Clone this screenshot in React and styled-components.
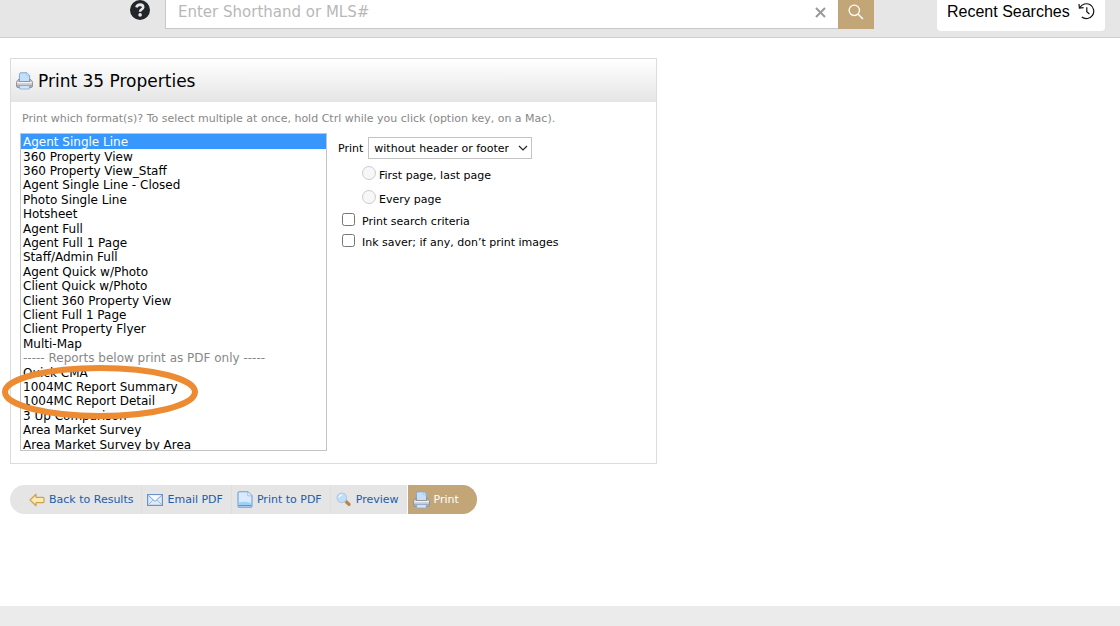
import { useState } from "react";
import styled, { createGlobalStyle } from "styled-components";

const FORMATS = [
  "Agent Single Line",
  "360 Property View",
  "360 Property View_Staff",
  "Agent Single Line - Closed",
  "Photo Single Line",
  "Hotsheet",
  "Agent Full",
  "Agent Full 1 Page",
  "Staff/Admin Full",
  "Agent Quick w/Photo",
  "Client Quick w/Photo",
  "Client 360 Property View",
  "Client Full 1 Page",
  "Client Property Flyer",
  "Multi-Map",
];

const PDF_FORMATS = [
  "Quick CMA",
  "1004MC Report Summary",
  "1004MC Report Detail",
  "3 Up Comparison",
  "Area Market Survey",
  "Area Market Survey by Area",
];

const PrinterIcon = () => (
  <svg width="17" height="18" viewBox="0 0 17 18" aria-hidden="true">
    <path d="M3.4 9.5V2.4Q3.4.8 5 .8H11L13.6 3.4V9.5Z" fill="#c6dff8" stroke="#7ba5d8" />
    <path d="M10.8 1V3.7H13.4" fill="#eef6ff" stroke="#8fb5e2" strokeWidth=".7" />
    <path d="M3.2 7L1.3 8.6Q.5 9.4.5 10.4V14Q.5 15.5 2 15.5H15Q16.5 15.5 16.5 14V10.4Q16.5 9.4 15.7 8.6L13.8 7V9.6H3.2Z" fill="#c9cace" stroke="#8b8c92" strokeWidth=".9" />
    <path d="M1.2 10.6H15.8" stroke="#f3f3f5" strokeWidth="1.2" />
    <path d="M1 13.9H16" stroke="#9b9ca2" strokeWidth="1.4" />
    <path d="M3.6 13.6H13.4V17H3.6Z" fill="#d2e5f9" stroke="#88a6cf" strokeWidth=".8" />
  </svg>
);

const ArrowIcon = () => (
  <svg width="16" height="14" viewBox="0 0 16 14" aria-hidden="true">
    <path
      d="M1 7L7 1.2V4.3H14Q15 4.3 15 5.2V8.8Q15 9.7 14 9.7H7V12.8Z"
      fill="#fde9b4"
      stroke="#d0a24c"
      strokeWidth="1.2"
      strokeLinejoin="round"
    />
  </svg>
);

const MailIcon = () => (
  <svg width="16" height="12" viewBox="0 0 16 12" aria-hidden="true">
    <rect x=".6" y=".6" width="14.8" height="10.8" fill="#dcebfb" stroke="#6c93c9" strokeWidth="1.2" />
    <path d="M1.5 10.5L6 6M14.5 10.5L10 6" stroke="#9dbbe2" fill="none" />
    <path d="M1.3 1.3L8 7.4L14.7 1.3" stroke="#7ea2d3" fill="#f5faff" />
  </svg>
);

const PageIcon = () => (
  <svg width="16" height="17" viewBox="0 0 16 17" aria-hidden="true">
    <path d="M1 2Q1 .8 2.2.8H10.8L15 4.8V14.8Q15 16.2 13.8 16.2H2.2Q1 16.2 1 15Z" fill="#d8eafc" stroke="#6d9fd8" strokeWidth="1.1" />
    <path d="M10.8 1V4.8H14.8" fill="#f0f7ff" stroke="#8fb5e2" strokeWidth=".8" />
    <path d="M1.8 11.4Q8 10 14.2 12V14H1.8Z" fill="#9fd0f8" />
    <path d="M1.6 14.6H14.4" stroke="#5d93d2" strokeWidth="1.2" />
  </svg>
);

const MagnifierIcon = () => (
  <svg width="16" height="16" viewBox="0 0 16 16" aria-hidden="true">
    <path d="M10.2 9.6L13 12.4" stroke="#b98352" strokeWidth="3.4" strokeLinecap="round" />
    <path d="M8.6 8.6L10 9.9" stroke="#8f9297" strokeWidth="1.8" />
    <circle cx="5.8" cy="5.8" r="4.8" fill="#c0defa" stroke="#b3cae4" strokeWidth="1.2" />
    <path d="M3 5.4Q3.6 3 6 2.8" stroke="#fff" strokeWidth="1.3" fill="none" />
  </svg>
);

const HelpIcon = () => (
  <svg width="20" height="20" viewBox="0 0 20 20" aria-hidden="true">
    <circle cx="10" cy="10" r="10" fill="#212529" />
    <path d="M6.4 7.4Q7.2 4.6 10.1 4.6Q13.2 4.8 13.2 7.2Q13.2 8.5 11.6 9.4Q10.1 10.2 10.1 11.8" stroke="#e6e6e6" strokeWidth="2.6" fill="none" />
    <circle cx="10.1" cy="14.9" r="1.8" fill="#e6e6e6" />
  </svg>
);

const SearchIcon = () => (
  <svg width="16" height="16" viewBox="0 0 16 16" fill="none" stroke="#fff" strokeWidth="1.3" aria-hidden="true">
    <circle cx="6.3" cy="6.3" r="5.2" />
    <path d="M10.2 10.2L15 15" />
  </svg>
);

const HistoryIcon = () => (
  <svg width="17" height="17" viewBox="0 0 17 17" fill="none" stroke="#111" strokeWidth="1.2" aria-hidden="true">
    <path d="M1.8 4.7A7.4 7.4 0 1 1 3.8 14" />
    <path d="M1 1L1.4 5.2L5.6 4.7" />
    <path d="M8.8 4.2V8.8L11.4 11" />
  </svg>
);

const App = () => {
  const [layout, setLayout] = useState("none");
  const [selected, setSelected] = useState(["Agent Single Line"]);

  const onFormats = (e) =>
    setSelected(Array.from(e.target.selectedOptions, (o) => o.value));

  return (
    <Page>
      <GlobalStyle />
      <TopBar>
        <HelpButton type="button" aria-label="Help">
          <HelpIcon />
        </HelpButton>
        <SearchForm onSubmit={(e) => e.preventDefault()}>
          <SearchInput aria-label="Search" placeholder="Enter Shorthand or MLS#" />
          <ClearButton type="button" aria-label="Clear">
            <svg width="11" height="11" viewBox="0 0 11 11" stroke="#999" strokeWidth="2">
              <path d="M1 1L10 10M10 1L1 10" />
            </svg>
          </ClearButton>
          <SearchButton type="submit" aria-label="Go">
            <SearchIcon />
          </SearchButton>
        </SearchForm>
        <RecentButton type="button">
          Recent Searches
          <HistoryIcon />
        </RecentButton>
      </TopBar>

      <Main>
        <Panel>
          <PanelHeader>
            <PrinterIcon />
            <PanelTitle>Print 35 Properties</PanelTitle>
          </PanelHeader>
          <PanelBody>
            <Hint htmlFor="formats">
              Print which format(s)? To select multiple at once, hold Ctrl while
              you click (option key, on a Mac).
            </Hint>
            <Columns>
              <ListWrapper>
                <FormatList id="formats" multiple value={selected} onChange={onFormats}>
                  {FORMATS.map((name) => (
                    <option key={name}>{name}</option>
                  ))}
                  <option disabled>----- Reports below print as PDF only -----</option>
                  {PDF_FORMATS.map((name) => (
                    <option key={name}>{name}</option>
                  ))}
                </FormatList>
                <Highlight viewBox="0 0 196 54" aria-hidden="true">
                  <ellipse cx="98" cy="27" rx="95" ry="24" fill="none" stroke="#ed8b33" strokeWidth="6" />
                </Highlight>
              </ListWrapper>
              <Settings>
                <SelectRow>
                  <label htmlFor="layout">Print</label>
                  <SelectBox>
                    <LayoutSelect id="layout" value={layout} onChange={(e) => setLayout(e.target.value)}>
                      <option value="none">without header or footer</option>
                      <option value="with">with header or footer</option>
                    </LayoutSelect>
                    <Chevron width="10" height="6" viewBox="0 0 10 6" aria-hidden="true">
                      <path d="M1 1L5 5L9 1" fill="none" stroke="#222" strokeWidth="1.2" />
                    </Chevron>
                  </SelectBox>
                </SelectRow>
                <RadioRow>
                  <Radio type="radio" name="pages" disabled={layout === "none"} />
                  <span>First page, last page</span>
                </RadioRow>
                <RadioRow>
                  <Radio type="radio" name="pages" disabled={layout === "none"} />
                  <span>Every page</span>
                </RadioRow>
                <CheckRow>
                  <Checkbox type="checkbox" />
                  <span>Print search criteria</span>
                </CheckRow>
                <CheckRow>
                  <Checkbox type="checkbox" />
                  <span>Ink saver; if any, don’t print images</span>
                </CheckRow>
              </Settings>
            </Columns>
          </PanelBody>
        </Panel>

        <Toolbar>
          <Action href="#results"><ArrowIcon />Back to Results</Action>
          <Action href="#email"><MailIcon />Email PDF</Action>
          <Action href="#pdf"><PageIcon />Print to PDF</Action>
          <Action href="#preview"><MagnifierIcon />Preview</Action>
          <Action href="#print" $primary><PrinterIcon />Print</Action>
        </Toolbar>
      </Main>
      <Footer />
    </Page>
  );
};

export default App;

const GlobalStyle = createGlobalStyle`
  * {
    box-sizing: border-box;
  }

  body {
    margin: 0;
    background: #fff;
    color: #000;
    font-family: Verdana, "DejaVu Sans", sans-serif;
    font-size: 11px;
  }

  button, input, select {
    font-family: inherit;
  }
`;

const Page = styled.div`
  display: flex;
  flex-direction: column;
  min-height: 100vh;
`;

const TopBar = styled.header`
  display: flex;
  align-items: flex-start;
  height: 38px;
  padding: 0 15px 0 130px;
  background: #e6e6e6;
  border-bottom: 1px solid #d0d0d0;
`;

const HelpButton = styled.button`
  display: flex;
  margin-right: 15px;
  padding: 0;
  border: 0;
  background: none;
`;

const SearchForm = styled.form`
  flex: 1;
  display: flex;
  height: 29px;
  margin-right: 63px;
  background: #fff;
  border-left: 1px solid #c8c8c8;
`;

const SearchInput = styled.input`
  flex: 1;
  min-width: 0;
  padding: 0 12px 4px;
  border: 0;
  border-bottom: 1px solid #c8c8c8;
  font-size: 15px;
  outline: none;

  &::placeholder {
    color: #b8b8b8;
  }
`;

const ClearButton = styled.button`
  display: flex;
  align-items: center;
  width: 23px;
  padding: 0 0 4px;
  border: 0;
  border-bottom: 1px solid #c8c8c8;
  background: #fff;
`;

const SearchButton = styled.button`
  display: flex;
  align-items: center;
  justify-content: center;
  width: 36px;
  padding: 0 0 6px;
  border: 0;
  background: #c3a678;
`;

const RecentButton = styled.button`
  display: flex;
  align-items: center;
  justify-content: space-between;
  width: 168px;
  height: 31px;
  padding: 0 10px 8px;
  border: 0;
  border-radius: 0 0 4px 4px;
  background: #fff;
  color: #000;
  && {
    font-family: "Liberation Sans", Arial, sans-serif;
  }
  font-size: 16px;
`;

const Main = styled.main`
  flex: 1;
  padding: 20px 10px;
`;

const Panel = styled.section`
  max-width: 647px;
  border: 1px solid #dcdcdc;
`;

const PanelHeader = styled.div`
  display: flex;
  align-items: center;
  gap: 5px;
  height: 43px;
  padding: 0 5px;
  background: linear-gradient(#fff, #e5e5e5);
`;

const PanelTitle = styled.h1`
  margin: 0;
  font-size: 17px;
  font-weight: normal;
`;

const PanelBody = styled.div`
  padding: 10px 9px 12px;
`;

const Hint = styled.label`
  display: block;
  padding: 0 2px;
  color: #888;
  font-size: 11px;
  line-height: 14px;
`;

const Columns = styled.div`
  display: flex;
  gap: 11px;
  margin-top: 7px;
`;

const ListWrapper = styled.div`
  position: relative;
  width: 307px;
`;

const FormatList = styled.select`
  display: block;
  width: 100%;
  height: 318px;
  padding: 0;
  border: 1px solid #c4c4c4;
  border-radius: 0;
  background: #fff;
  color: #000;
  font-size: 12px;
  overflow: hidden;
  outline: none;

  option {
    min-height: 0;
    padding: 0 2px;
  }

  option:first-child,
  option:nth-child(5n),
  option:nth-child(5n + 2) {
    padding-top: 1px;
  }

  option:disabled {
    color: #888;
  }

  option:checked {
    background: #3797fd linear-gradient(#3797fd, #3797fd);
    color: #fff;
  }
`;

// hand-drawn style marker over the 1004MC reports
const Highlight = styled.svg`
  position: absolute;
  top: 232px;
  left: -18px;
  width: 196px;
  height: 54px;
  pointer-events: none;
`;

const Settings = styled.div`
  padding-top: 4px;
`;

const SelectRow = styled.div`
  display: flex;
  align-items: center;
  gap: 5px;
  margin-bottom: 6px;
`;

const SelectBox = styled.div`
  position: relative;
`;

const LayoutSelect = styled.select`
  appearance: none;
  display: block;
  height: 22px;
  padding: 0 22px 0 5px;
  border: 1px solid #c4c4c4;
  border-radius: 0;
  background: #fff;
  color: #000;
  font-size: 11px;
`;

const Chevron = styled.svg`
  position: absolute;
  top: 8px;
  right: 4px;
  pointer-events: none;
`;

const RadioRow = styled.label`
  display: flex;
  gap: 3px;
  height: 24px;
  padding-left: 24px;
  line-height: 22px;
`;

const CheckRow = styled.label`
  display: flex;
  gap: 7px;
  height: 21px;
  padding-left: 4px;
  line-height: 18px;
`;

const Radio = styled.input`
  appearance: none;
  width: 14px;
  height: 14px;
  margin: 1px 0 0;
  border: 1px solid #ccc;
  border-radius: 50%;
  background: #f7f7f7;
`;

const Checkbox = styled.input`
  width: 13px;
  height: 13px;
  margin: 0;
`;

const Toolbar = styled.nav`
  display: flex;
  width: fit-content;
  height: 29px;
  margin-top: 21px;
  border-radius: 15px;
  background: #e5e5e5;
  overflow: hidden;
`;

const Action = styled.a`
  display: flex;
  align-items: center;
  gap: 4px;
  padding: 0 8px 0 5px;
  border-left: 1px solid ${(p) => (p.$primary ? "#fff" : "#dfdfdf")};
  background: ${(p) => (p.$primary ? "#c3a678" : "transparent")};
  color: ${(p) => (p.$primary ? "#fff" : "#1c5cab")};
  font-size: 11px;
  text-decoration: none;
  white-space: nowrap;

  &:first-child {
    padding-left: 19px;
    border-left: 0;
  }

  &:last-child {
    padding-right: 18px;
  }
`;

const Footer = styled.footer`
  height: 20px;
  background: #ebebeb;
`;
